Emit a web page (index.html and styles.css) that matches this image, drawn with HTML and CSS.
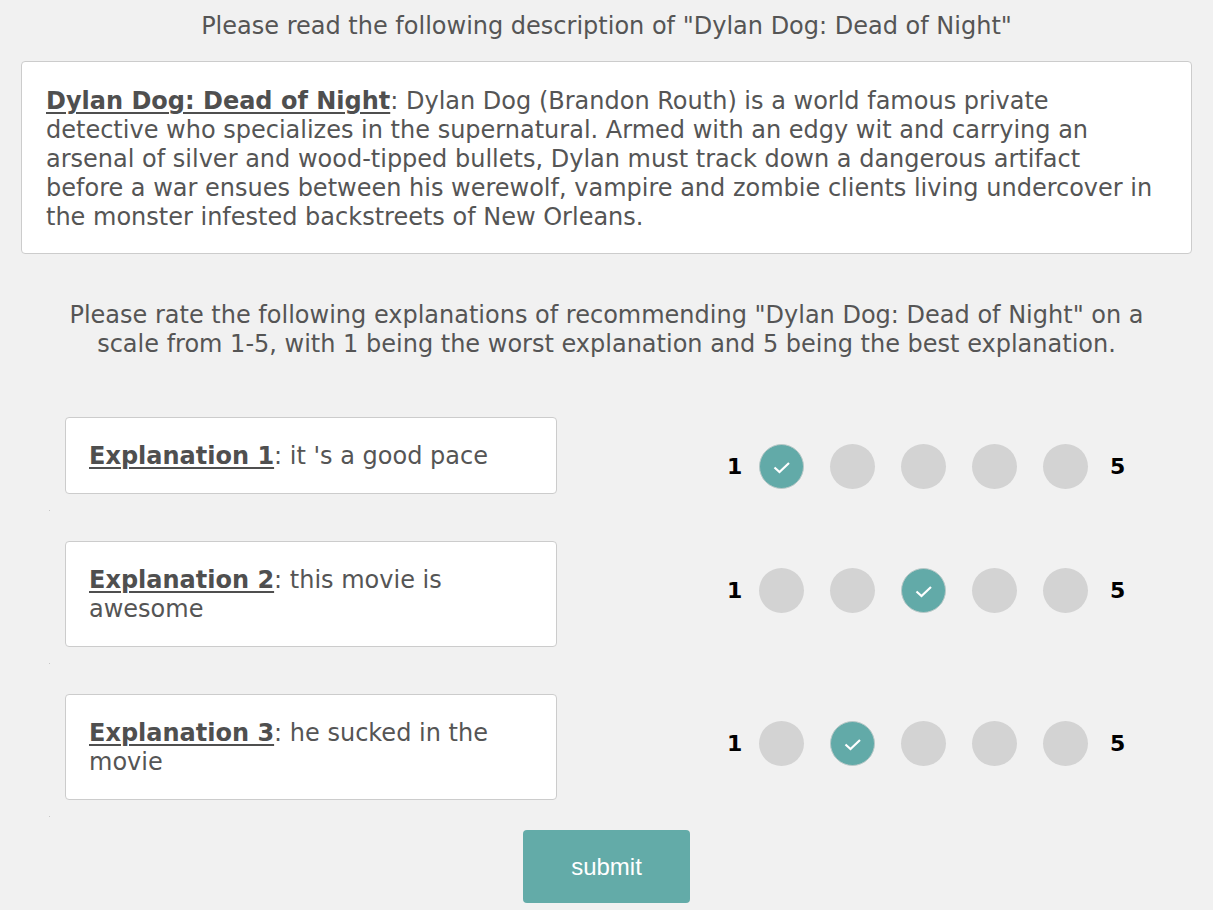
FILE: index.html
```html
<!DOCTYPE html>
<html>
<head>
<meta charset="utf-8">
<link rel="stylesheet" href="styles.css">
</head>
<body>
<div class="page">
  <p class="heading">Please read the following description of "Dylan Dog: Dead of Night"</p>
  <div class="desc">
    <p><b class="u">Dylan Dog: Dead of Night</b>: Dylan Dog (Brandon Routh) is a world famous private detective who specializes in the supernatural. Armed with an edgy wit and carrying an arsenal of silver and wood-tipped bullets, Dylan must track down a dangerous artifact before a war ensues between his werewolf, vampire and zombie clients living undercover in the monster infested backstreets of New Orleans.</p>
  </div>
  <p class="instr">Please rate the following explanations of recommending "Dylan Dog: Dead of Night" on a scale from 1-5, with 1 being the worst explanation and 5 being the best explanation.</p>

  <div class="rows">
    <div class="row">
      <div class="expl"><b class="u">Explanation 1</b>: it 's a good pace</div>
      <div class="rating">
        <span class="lbl">1</span>
        <span class="dot on"><svg class="check" viewBox="0 0 19 13" width="19" height="13"><path d="M2.5 6.5 L7.5 11 L17 2" fill="none" stroke="#fff" stroke-width="2.2"/></svg></span>
        <span class="dot"></span>
        <span class="dot"></span>
        <span class="dot"></span>
        <span class="dot"></span>
        <span class="lbl">5</span>
      </div>
    </div>
    <div class="sep"></div>
    <div class="row">
      <div class="expl"><b class="u">Explanation 2</b>: this movie is awesome</div>
      <div class="rating">
        <span class="lbl">1</span>
        <span class="dot"></span>
        <span class="dot"></span>
        <span class="dot on"><svg class="check" viewBox="0 0 19 13" width="19" height="13"><path d="M2.5 6.5 L7.5 11 L17 2" fill="none" stroke="#fff" stroke-width="2.2"/></svg></span>
        <span class="dot"></span>
        <span class="dot"></span>
        <span class="lbl">5</span>
      </div>
    </div>
    <div class="sep"></div>
    <div class="row">
      <div class="expl"><b class="u">Explanation 3</b>: he sucked in the movie</div>
      <div class="rating">
        <span class="lbl">1</span>
        <span class="dot"></span>
        <span class="dot on"><svg class="check" viewBox="0 0 19 13" width="19" height="13"><path d="M2.5 6.5 L7.5 11 L17 2" fill="none" stroke="#fff" stroke-width="2.2"/></svg></span>
        <span class="dot"></span>
        <span class="dot"></span>
        <span class="dot"></span>
        <span class="lbl">5</span>
      </div>
    </div>
    <div class="sep"></div>
  </div>

  <div class="actions">
    <button class="submit">submit</button>
  </div>
</div>
</body>
</html>
```

FILE: styles.css
```css
html, body {
  margin: 0;
  padding: 0;
  background: #f1f1f1;
}
body {
  font-family: "DejaVu Sans", Verdana, sans-serif;
  color: #555;
  font-size: 24px;
  line-height: 29px;
}
p { margin: 0; }
.page {
  padding: 12px 21px 0 21px;
}
.heading {
  text-align: center;
}
.desc {
  margin-top: 20px;
  background: #fff;
  border: 1px solid #ccc;
  border-radius: 4px;
  padding: 25px 30px 21px 24px;
}
.u {
  text-decoration: underline;
  text-underline-offset: 3px;
  text-decoration-thickness: 2px;
  color: #4f4f4f;
}
.instr {
  margin-top: 47px;
  text-align: center;
  padding: 0 40px;
}
.rows {
  margin-top: 58px;
  padding-left: 44px;
}
.row {
  display: flex;
  align-items: flex-start;
}
.expl {
  width: 444px;
  background: #fff;
  border: 1px solid #ccc;
  border-radius: 4px;
  padding: 24px 23px 22px 23px;
}
.rating {
  display: flex;
  align-items: center;
  margin-left: 170px;
  margin-top: 27px;
}
.lbl {
  font-weight: bold;
  color: #000;
  font-size: 22px;
  width: 14px;
  text-align: center;
}
.dot {
  width: 45px;
  height: 45px;
  border-radius: 50%;
  background: #d3d3d3;
  margin: 0 13px;
  display: flex;
  align-items: center;
  justify-content: center;
  box-sizing: border-box;
}
.rating .dot:nth-child(2) { margin-left: 18px; }
.rating .dot:nth-child(6) { margin-right: 22px; }
.dot.on {
  background: #62aaa8;
  border: 1px solid #b9c9c8;
}
.check {
  margin-top: 2px;
}
.sep {
  width: 1px;
  height: 1px;
  background: #c8c8c8;
  margin: 16px 0 30px -16px;
}
.actions {
  display: flex;
  justify-content: center;
  margin-top: -17px;
}
.submit {
  width: 167px;
  height: 73px;
  background: #63aba8;
  border: none;
  border-radius: 4px;
  color: #fff;
  font-family: "Liberation Sans", Arial, sans-serif;
  font-size: 24px;
  padding: 0;
}
```
